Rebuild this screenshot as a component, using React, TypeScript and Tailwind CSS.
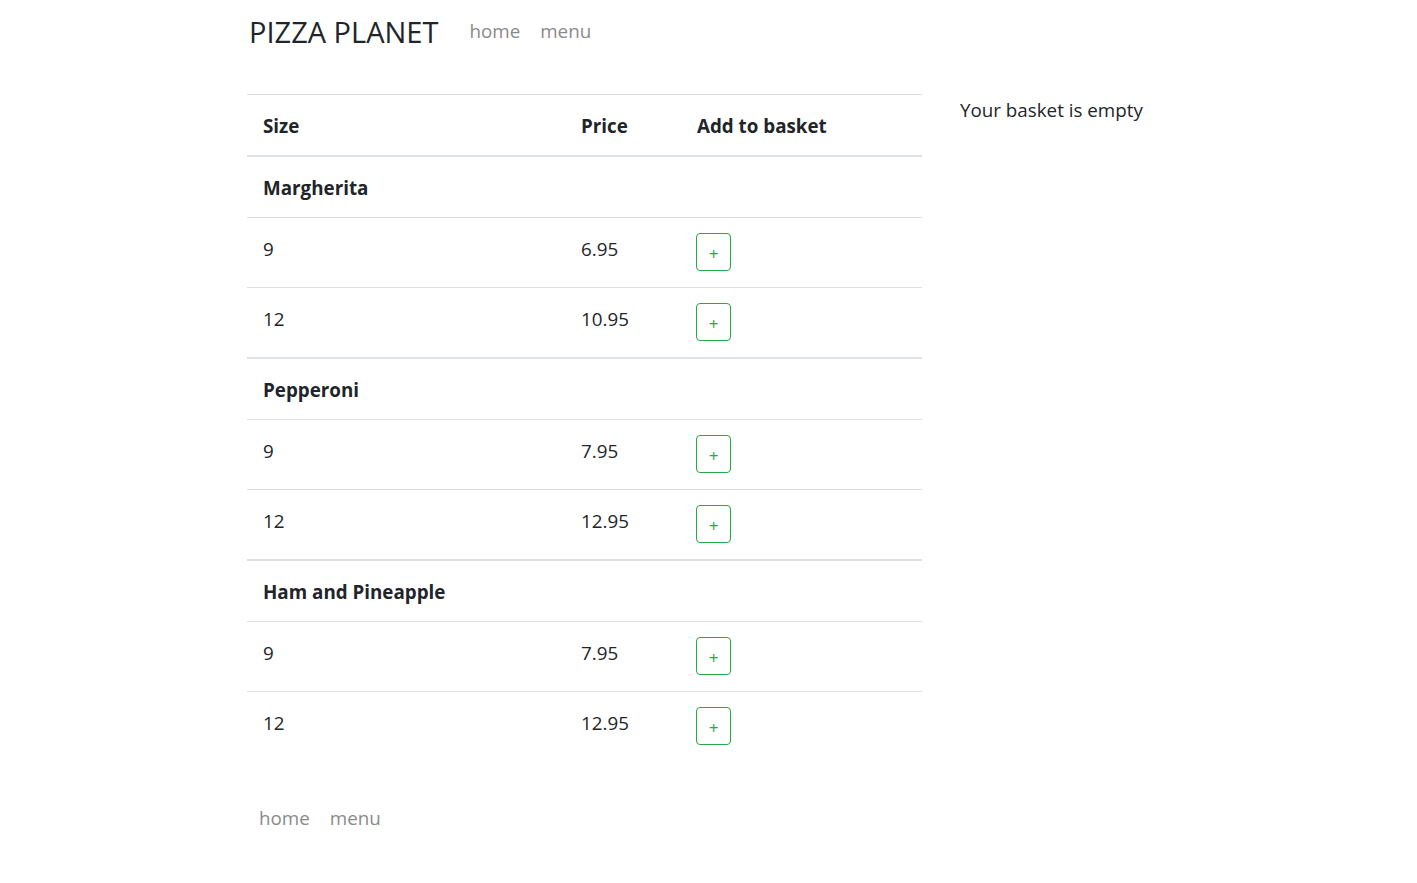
import React from "react";

const pizzas = [
  { name: "Margherita", items: [{ size: "9", price: "6.95" }, { size: "12", price: "10.95" }] },
  { name: "Pepperoni", items: [{ size: "9", price: "7.95" }, { size: "12", price: "12.95" }] },
  { name: "Ham and Pineapple", items: [{ size: "9", price: "7.95" }, { size: "12", price: "12.95" }] },
];

export default function App() {
  return (
    <div
      className="min-h-screen bg-white text-[#212529] text-[18.8px] leading-[30px]"
      style={{ fontFamily: '"Open Sans", "Noto Sans", sans-serif' }}
    >
      <div className="pl-[247px]">
        <nav className="flex items-center h-[62px]">
          <span className="ml-[2px] text-[29px] leading-none text-[#212529]">PIZZA PLANET</span>
          <a className="ml-[31px] text-[#8a8a8a]">home</a>
          <a className="ml-[20px] text-[#8a8a8a]">menu</a>
        </nav>
        <div className="flex mt-[32px]">
          <table className="w-[675px] border-collapse">
            <thead>
              <tr className="border-t border-[#dee2e6]">
                <th className="w-[318px] text-left font-bold pl-[16px] pr-[14px] pt-[16px] pb-[14px] border-b-2 border-[#dee2e6]">Size</th>
                <th className="w-[116px] text-left font-bold pl-[16px] pr-[14px] pt-[16px] pb-[14px] border-b-2 border-[#dee2e6]">Price</th>
                <th className="text-left font-bold pl-[16px] pr-[14px] pt-[16px] pb-[14px] border-b-2 border-[#dee2e6]">Add to basket</th>
              </tr>
            </thead>
            {pizzas.map((p, i) => (
              <tbody key={p.name} className={i > 0 ? "border-t-2 border-[#dee2e6]" : ""}>
                <tr>
                  <td colSpan={3} className="pl-[16px] pr-[14px] pt-[16px] pb-[14px] font-bold">{p.name}</td>
                </tr>
                {p.items.map((it) => (
                  <tr key={it.size} className="border-t border-[#dee2e6]">
                    <td className="pl-[16px] pr-[14px] pt-[16px] pb-[23px] align-top">{it.size}</td>
                    <td className="pl-[16px] pr-[14px] pt-[16px] pb-[23px] align-top">{it.price}</td>
                    <td className="px-[15px] pt-[15px] pb-[16px] align-top">
                      <button className="w-[35px] h-[38px] border border-[#28a745] rounded-[4px] text-[#28a745] text-[17px] leading-none flex items-center justify-center pt-[2px]">
                        +
                      </button>
                    </td>
                  </tr>
                ))}
              </tbody>
            ))}
          </table>
          <div className="ml-[38px] mt-[1px]">Your basket is empty</div>
        </div>
        <footer className="flex mt-[42px] pl-[12px]">
          <a className="text-[#8a8a8a]">home</a>
          <a className="ml-[20px] text-[#8a8a8a]">menu</a>
        </footer>
      </div>
    </div>
  );
}
